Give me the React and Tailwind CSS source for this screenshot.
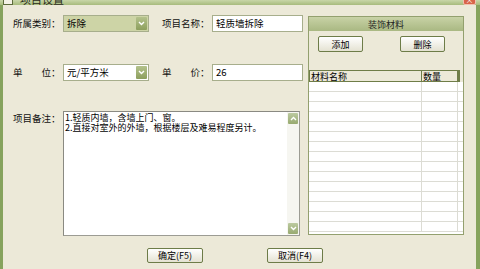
import React from 'react';

const FONT = { fontFamily: '"Noto Sans CJK SC", "Noto Sans", sans-serif' };

// small chevron used on combo boxes and scroll arrows
const Chevron = ({ up = false }) => (
  <svg width="7" height="5" viewBox="0 0 7 5">
    <path
      d={up ? 'M1 4 L3.5 1.5 L6 4' : 'M1 1 L3.5 3.5 L6 1'}
      fill="none"
      stroke="#ffffff"
      strokeWidth="1.4"
    />
  </svg>
);

const Combo = ({ value, filled }) => (
  <div
    className={`w-[86px] h-[17px] shrink-0 flex items-center border border-[#a7ae8c] ${
      filled ? 'bg-[#cdd4a6]' : 'bg-white'
    }`}
  >
    <span className="flex-1 pl-[3px] text-[9.5px] leading-none text-black">{value}</span>
    <div className="w-[11px] h-[13px] mr-[1px] flex items-center justify-center rounded-[1px] bg-gradient-to-b from-[#b4c28c] to-[#8d9f5d]">
      <Chevron />
    </div>
  </div>
);

const TextBox = ({ value }) => (
  <div className="w-[91px] h-[17px] shrink-0 flex items-center bg-white border border-[#a7ae8c]">
    <span className="pl-[3px] text-[9.5px] leading-none text-black">{value}</span>
  </div>
);

const Label = ({ children }) => (
  <span className="block w-[50px] shrink-0 text-[9.5px] leading-none text-[#111] whitespace-pre">
    {children}
  </span>
);

const XpButton = ({ children, className = '' }) => (
  <div
    className={`shrink-0 flex items-center justify-center border border-[#6d7c48] rounded-[2px] bg-gradient-to-b from-white to-[#e4e2d2] text-[9px] leading-none text-black ${className}`}
  >
    {children}
  </div>
);

export default function App() {
  const rows = Array.from({ length: 15 });

  return (
    <div
      className="w-[480px] h-[269px] bg-[#ece9d8] flex flex-col overflow-hidden"
      style={FONT}
    >
      {/* title bar, cut off at the top */}
      <div className="h-[5px] flex items-end overflow-hidden bg-gradient-to-b from-[#c9d6a8] to-[#a7bb7c]">
        <div className="ml-[3px] w-[10px] h-[9px] bg-[#f4f2e6] border border-[#5d6b3c]" />
        <span className="ml-[7px] text-[11px] leading-[11px] text-[#2a2a1a]">项目设置</span>
        <div className="ml-auto mr-[4px] w-[13px] h-[10px] flex items-end justify-center rounded-[2px] bg-[#d8644a] border border-[#f2c0b0] text-[8px] leading-none text-white">
          ×
        </div>
      </div>

      <div className="flex-1 flex">
        <div className="w-[3px] bg-[#86a35d]" />

        <div className="flex-1 flex">
          {/* left column */}
          <div className="w-[302px] shrink-0 flex flex-col pl-[10px]">
            <div className="mt-[10px] flex items-center">
              <Label>所属类别：</Label>
              <Combo value="拆除" filled />
              <div className="w-[13px] shrink-0" />
              <Label>项目名称：</Label>
              <TextBox value="轻质墙拆除" />
            </div>

            <div className="mt-[32px] flex items-center">
              <Label>单　　位：</Label>
              <Combo value="元/平方米" />
              <div className="w-[13px] shrink-0" />
              <Label>单　　价：</Label>
              <TextBox value="26" />
            </div>

            <div className="mt-[30px] flex items-start">
              <div className="pt-[3px]">
                <Label>项目备注：</Label>
              </div>
              <div className="w-[237px] h-[125px] shrink-0 flex bg-white border border-[#9c9c94] border-t-[#8a8a82] border-l-[#8a8a82]">
                <div className="flex-1 pl-[1px] pt-[1px] text-[9px] leading-[10px] text-black whitespace-pre">
                  {'1.轻质内墙，含墙上门、窗。\n2.直接对室外的外墙，根据楼层及难易程度另计。'}
                </div>
                <div className="w-[12px] flex flex-col justify-between bg-[#f6f6f1] py-[1px]">
                  <div className="h-[11px] mx-[1px] flex items-center justify-center rounded-[1px] bg-gradient-to-b from-[#bccaa0] to-[#98aa70]">
                    <Chevron up />
                  </div>
                  <div className="h-[11px] mx-[1px] flex items-center justify-center rounded-[1px] bg-gradient-to-b from-[#bccaa0] to-[#98aa70]">
                    <Chevron />
                  </div>
                </div>
              </div>
            </div>

            <div className="mt-[12px] flex pl-[134px] gap-[64px]">
              <XpButton className="w-[56px] h-[15px]">确定(F5)</XpButton>
              <XpButton className="w-[56px] h-[15px]">取消(F4)</XpButton>
            </div>
          </div>

          {/* material panel */}
          <div className="ml-[3px] mt-[11px] w-[156px] h-[219px] shrink-0 flex flex-col border border-[#93a06e]">
            <div className="h-[14px] flex items-center justify-center bg-gradient-to-b from-[#c8d2a6] to-[#a9b882] text-[9px] leading-none text-[#222]">
              装饰材料
            </div>
            <div className="flex pl-[9px] pt-[5px] gap-[37px]">
              <XpButton className="w-[45px] h-[16px]">添加</XpButton>
              <XpButton className="w-[45px] h-[16px]">删除</XpButton>
            </div>
            <div className="mt-[18px] flex-1 flex flex-col bg-white overflow-hidden">
              <div className="h-[12px] flex bg-[#ece9d8]">
                <div className="w-[113px] pl-[1px] flex items-center border border-[#6f7d48] text-[9px] leading-none text-black">
                  材料名称
                </div>
                <div className="w-[36px] pl-[1px] flex items-center border border-l-0 border-[#6f7d48] text-[9px] leading-none text-black">
                  数量
                </div>
                <div className="flex-1 border-l-2 border-[#6f7d48]" />
              </div>
              {rows.map((_, i) => (
                <div key={i} className="h-[10px] flex border-b border-[#dcdcd4]">
                  <div className="w-[113px] border-r border-[#dcdcd4]" />
                  <div className="w-[36px] border-r border-[#dcdcd4]" />
                  <div className="flex-1" />
                </div>
              ))}
            </div>
          </div>
        </div>

        <div className="w-[4px] bg-[#86a35d]" />
      </div>
    </div>
  );
}
